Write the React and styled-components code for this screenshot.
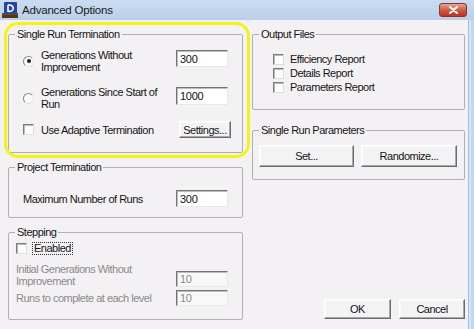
import React from 'react';
import styled, { createGlobalStyle } from 'styled-components';

const Global = createGlobalStyle`
  html, body { margin: 0; padding: 0; }
  body {
    width: 474px; height: 329px; overflow: hidden;
    background: #f4f1f4;
    font-family: "Liberation Sans", Arial, sans-serif;
    font-size: 11px; color: #151515;
  }
`;

const Window = styled.div`
  width: 474px; height: 329px;
  display: flex; flex-direction: column;
`;

const TitleBar = styled.div`
  height: 20px; flex: none;
  display: flex; align-items: center;
  padding: 0 7px 0 2px;
  background: linear-gradient(#cadcf0, #b9d0e9);
`;

const TitleText = styled.span`
  flex: 1; margin-left: 4px;
  font-size: 11.5px; color: #1a1a1a;
  letter-spacing: -0.2px;
`;

const CloseButton = styled.div`
  width: 28px; height: 14px; box-sizing: border-box;
  border: 1px solid #8e3427; border-radius: 3px;
  background: linear-gradient(#e9a696, #cf5a45 50%, #bb3622);
  display: flex; align-items: center; justify-content: center;
`;

const Frame = styled.div`
  flex: 1; display: flex;
`;

const Client = styled.div`
  position: relative;
  width: 468px; box-sizing: border-box;
  padding: 7px 3px 0 8px;
  display: grid;
  grid-template-columns: 235px 213px;
  column-gap: 9px;
  align-items: stretch;
  align-content: start;
  background: #f4f1f4;
`;

const SideFrame = styled.div`
  flex: 1;
  background: linear-gradient(to right, #9ec2e4 0 1px, #d3e5f6 1px 3px, #c3d8ed 3px);
`;

const Column = styled.div`
  display: flex; flex-direction: column;
`;

const Group = styled.fieldset`
  margin: ${p => p.$mt || 0}px 0 0 0;
  padding: 0;
  min-width: 0;
  border: 1px solid #b0b0b0;
  border-radius: 2px;
`;

const Legend = styled.legend`
  margin-left: 6px;
  padding: 0 2px;
  line-height: 14px;
  font-size: 11px;
  letter-spacing: -0.5px;
`;

const GroupBody = styled.div`
  padding: ${p => p.$pad};
  display: flex; flex-direction: column;
`;

const Row = styled.div`
  display: grid;
  grid-template-columns: 1fr auto;
  align-items: ${p => p.$align || 'center'};
  margin-top: ${p => p.$mt || 0}px;
  min-height: ${p => p.$h || 0}px;
`;

const Choice = styled.label`
  display: flex; align-items: center;
  gap: ${p => p.$gap ?? 7}px;
`;

const Text = styled.span`
  display: block;
  max-width: ${p => p.$max ? p.$max + 'px' : 'none'};
  line-height: 12px;
  letter-spacing: -0.5px;
  color: ${p => p.$disabled ? '#8a8a8a' : '#151515'};
`;

const Focus = styled.span`
  display: block;
  padding: 0 1px;
  line-height: 11px;
  border: 1px dotted #333;
  letter-spacing: -0.5px;
`;

const Radio = styled.span`
  width: 11px; height: 11px; flex: none; box-sizing: border-box;
  border-radius: 50%;
  border: 1px solid #e2e2e2;
  border-top-color: #8a8a8a; border-left-color: #8a8a8a;
  background: #fafafa;
  display: flex; align-items: center; justify-content: center;
  &::after {
    content: '';
    width: 4px; height: 4px; border-radius: 50%;
    background: ${p => p.$on ? '#222' : 'transparent'};
  }
`;

const Check = styled.span`
  width: 11px; height: 11px; flex: none; box-sizing: border-box;
  border: 1px solid;
  border-color: #7c7c7c #dedede #dedede #7c7c7c;
  box-shadow: inset 1px 1px 0 #b9b9b9;
  background: #fdfdfd;
`;

const Field = styled.input`
  width: 52px; height: ${p => p.$h || 17}px; box-sizing: border-box;
  margin: ${p => p.$m || 0};
  padding: 0 0 0 3px;
  border: 1px solid;
  border-color: #747474 #e8e8e8 #e8e8e8 #747474;
  box-shadow: inset 1px 1px 0 #bdbdbd;
  background: ${p => p.disabled ? '#f8f8f8' : '#ffffff'};
  font-family: "Liberation Sans", Arial, sans-serif;
  font-size: 11px; letter-spacing: -0.3px;
  color: ${p => p.disabled ? '#8a8a8a' : '#111'};
  outline: none;
  &:disabled { color: #8a8a8a; -webkit-text-fill-color: #8a8a8a; opacity: 1; }
`;

const Button = styled.button`
  width: ${p => p.$w}px; height: ${p => p.$h}px;
  box-sizing: border-box; padding: 0;
  margin: ${p => p.$m || 0};
  font-family: "Liberation Sans", Arial, sans-serif;
  font-size: 11px; letter-spacing: -0.5px; color: #151515;
  background: #f3f2f4;
  border: 1px solid;
  border-color: #ffffff #6c6c6c #6c6c6c #ffffff;
  box-shadow: inset -1px -1px 0 #a8a8a8, inset 1px 1px 0 #f9f9f9;
`;

const ButtonRow = styled.div`
  display: flex; gap: ${p => p.$gap}px;
  justify-content: ${p => p.$justify || 'flex-start'};
  margin-top: ${p => p.$auto ? 'auto' : '0'};
  margin-bottom: ${p => p.$mb || 0}px;
`;

const CheckLine = styled.label`
  height: 14px;
  display: flex; align-items: center; gap: 6px;
`;

const Highlight = styled.div`
  position: absolute;
  left: 4px; top: 2px;
  width: 246px; height: 136px;
  box-sizing: border-box;
  border: 3px solid #f3f31a;
  border-radius: 14px;
  pointer-events: none;
`;

function AppIcon() {
  return (
    <svg width="16" height="16" viewBox="0 0 16 16">
      <rect x="0" y="11" width="16" height="5" fill="#7b4a1e" />
      <rect x="0" y="13" width="16" height="3" fill="#5a3413" />
      <rect x="2" y="0" width="13" height="12" rx="1" fill="#2446a2" />
      <path d="M6 3 C10 2.5 12 5 11 7.5 C10 9.5 7.5 9.8 6 9" stroke="#fff" strokeWidth="1.6" fill="none" />
      <path d="M6 3 L6 10" stroke="#fff" strokeWidth="1.6" />
    </svg>
  );
}

function CloseGlyph() {
  return (
    <svg width="9" height="8" viewBox="0 0 9 8">
      <path d="M1 1 L8 7 M8 1 L1 7" stroke="#fff" strokeWidth="2" strokeLinecap="round" />
    </svg>
  );
}

export default function App() {
  return (
    <>
      <Global />
      <Window>
        <TitleBar>
          <AppIcon />
          <TitleText>Advanced Options</TitleText>
          <CloseButton><CloseGlyph /></CloseButton>
        </TitleBar>
        <Frame>
          <Client>
            <Column>
              <Group>
                <Legend>Single Run Termination</Legend>
                <GroupBody $pad="8px 14px 14px 14px">
                  <Row $align="start">
                    <Choice>
                      <Radio $on />
                      <Text $max={122}>Generations Without Improvement</Text>
                    </Choice>
                    <Field defaultValue="300" $m="1px 0 0 0" />
                  </Row>
                  <Row $align="start" $mt={13}>
                    <Choice>
                      <Radio />
                      <Text $max={122}>Generations Since Start of Run</Text>
                    </Choice>
                    <Field defaultValue="1000" $m="1px 0 0 0" $h={18} />
                  </Row>
                  <Row $mt={11}>
                    <Choice>
                      <Check />
                      <Text>Use Adaptive Termination</Text>
                    </Choice>
                    <Button $w={52} $h={17} $m="0 -3px 0 0">Settings...</Button>
                  </Row>
                </GroupBody>
              </Group>

              <Group $mt={7}>
                <Legend>Project Termination</Legend>
                <GroupBody $pad="16px 14px 10px 14px">
                  <Row>
                    <Text>Maximum Number of Runs</Text>
                    <Field defaultValue="300" />
                  </Row>
                </GroupBody>
              </Group>

              <Group $mt={7}>
                <Legend>Stepping</Legend>
                <GroupBody $pad="3px 14px 13px 7px">
                  <Row $h={13}>
                    <Choice $gap={5}>
                      <Check />
                      <Focus>Enabled</Focus>
                    </Choice>
                  </Row>
                  <Row $align="end" $mt={8}>
                    <Text $disabled $max={140}>Initial Generations Without Improvement</Text>
                    <Field defaultValue="10" disabled $h={16} />
                  </Row>
                  <Row $mt={3}>
                    <Text $disabled $max={140}>Runs to complete at each level</Text>
                    <Field defaultValue="10" disabled $h={16} />
                  </Row>
                </GroupBody>
              </Group>
            </Column>

            <Column>
              <Group>
                <Legend>Output Files</Legend>
                <GroupBody $pad="11px 8px 15px 20px">
                  <CheckLine><Check /><Text>Efficiency Report</Text></CheckLine>
                  <CheckLine><Check /><Text>Details Report</Text></CheckLine>
                  <CheckLine><Check /><Text>Parameters Report</Text></CheckLine>
                </GroupBody>
              </Group>

              <Group $mt={13}>
                <Legend>Single Run Parameters</Legend>
                <GroupBody $pad="8px 6px 12px 6px">
                  <ButtonRow $gap={7}>
                    <Button $w={95} $h={22}>Set...</Button>
                    <Button $w={96} $h={22}>Randomize...</Button>
                  </ButtonRow>
                </GroupBody>
              </Group>

              <ButtonRow $gap={8} $justify="flex-end" $auto $mb={1}>
                <Button $w={67} $h={20}>OK</Button>
                <Button $w={66} $h={20}>Cancel</Button>
              </ButtonRow>
            </Column>
            <Highlight />
          </Client>
          <SideFrame />
        </Frame>
      </Window>
    </>
  );
}
